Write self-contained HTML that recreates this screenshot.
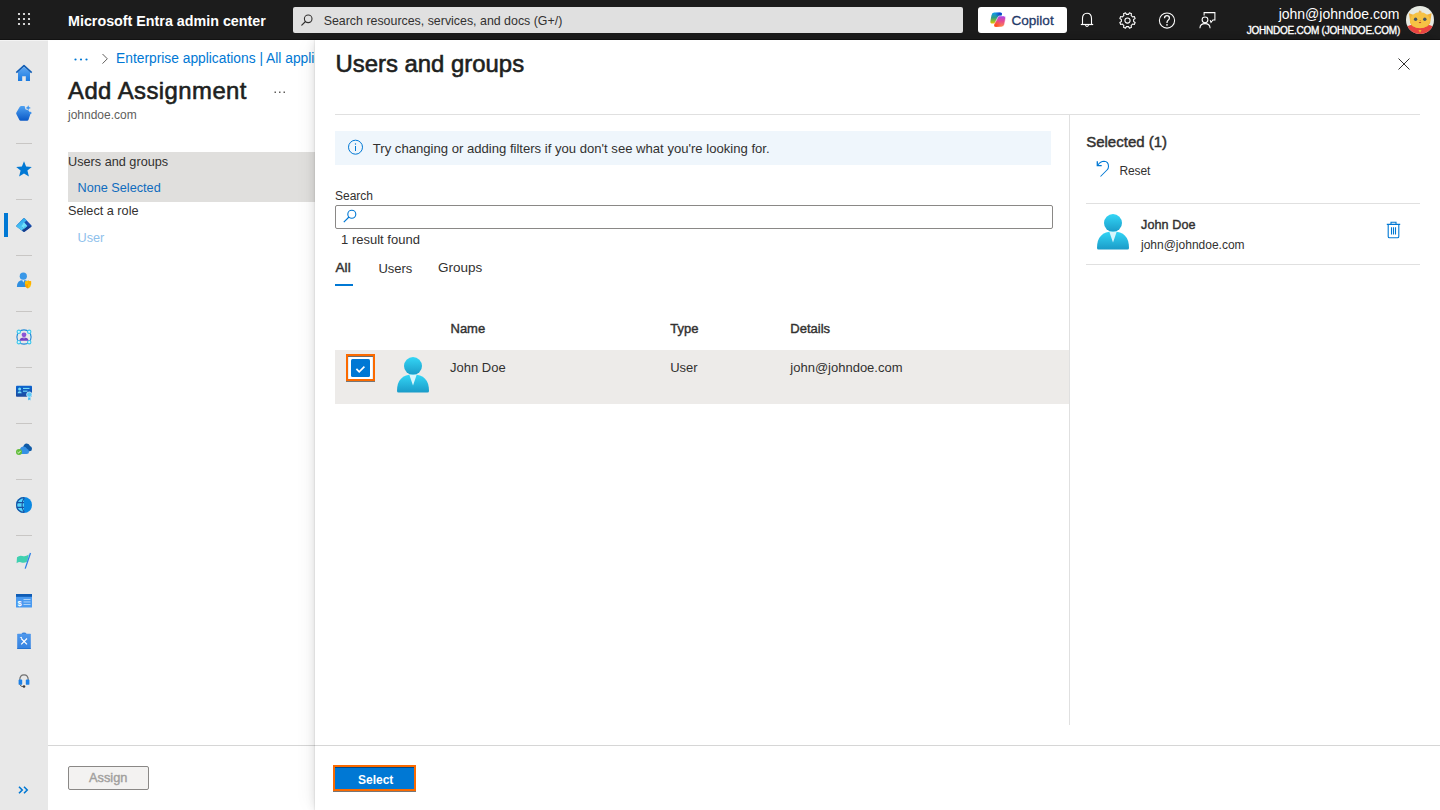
<!DOCTYPE html>
<html><head><meta charset="utf-8">
<style>
*{box-sizing:border-box;margin:0;padding:0}
html,body{width:1440px;height:810px;overflow:hidden;background:#fff;font-family:"Liberation Sans",sans-serif;color:#323130}
.a{position:absolute;white-space:nowrap}
svg.a{overflow:visible}
</style></head><body>
<div class="a" style="left:0px;top:0px;width:1440px;height:40px;background:#1c1c1c;"></div>
<div class="a" style="left:0px;top:39px;width:1440px;height:1px;background:#121212;"></div>
<svg class="a" style="left:18px;top:13px;" width="12" height="12" viewBox="0 0 12 12"><g fill="#fff"><circle cx="1" cy="1" r="1.1"/><circle cx="1" cy="6" r="1.1"/><circle cx="1" cy="11" r="1.1"/><circle cx="6" cy="1" r="1.1"/><circle cx="6" cy="6" r="1.1"/><circle cx="6" cy="11" r="1.1"/><circle cx="11" cy="1" r="1.1"/><circle cx="11" cy="6" r="1.1"/><circle cx="11" cy="11" r="1.1"/></g></svg>
<div class="a" style="left:68px;top:13.50px;font-size:14.3px;line-height:14.3px;color:#fff;font-weight:bold">Microsoft Entra admin center</div>
<div class="a" style="left:293px;top:7px;width:670px;height:26px;background:#e0e0e0;border-radius:2px"></div>
<svg class="a" style="left:301px;top:14px;" width="12" height="12" viewBox="0 0 12 12"><circle cx="7.2" cy="4.8" r="3.8" fill="none" stroke="#323130" stroke-width="1.1"/><path d="M4.5 7.5 L0.8 11.2" stroke="#323130" stroke-width="1.2" stroke-linecap="round"/></svg>
<div class="a" style="left:323.7px;top:14.50px;font-size:12.4px;line-height:12.4px;color:#323130">Search resources, services, and docs (G+/)</div>
<div class="a" style="left:978px;top:7px;width:89px;height:26px;background:#fff;border-radius:3px"></div>
<svg class="a" style="left:990px;top:12px;" width="16" height="15" viewBox="0 0 16 15"><defs>
<linearGradient id="cpa" x1="0" y1="0" x2="0" y2="1"><stop offset="0" stop-color="#0c9cf2"/><stop offset="0.45" stop-color="#2f9e8a"/><stop offset="0.7" stop-color="#7cb83a"/><stop offset="1" stop-color="#ecc400"/></linearGradient>
<linearGradient id="cpb" x1="0" y1="0" x2="0" y2="1"><stop offset="0" stop-color="#a844ee"/><stop offset="0.5" stop-color="#e84a8c"/><stop offset="1" stop-color="#ff8a4a"/></linearGradient>
<radialGradient id="cpc" cx="0.15" cy="0.9" r="0.5"><stop offset="0" stop-color="#ff4a1a"/><stop offset="1" stop-color="#ff4a1a" stop-opacity="0"/></radialGradient>
<radialGradient id="cpd" cx="0.85" cy="0.1" r="0.45"><stop offset="0" stop-color="#1038c8"/><stop offset="1" stop-color="#1038c8" stop-opacity="0"/></radialGradient></defs>
<path d="M4.2 0.6 H10 Q12.6 0.6 11.8 3 L8.2 10.2 Q7.6 11.6 6.2 11.6 H2.4 Q0 11.6 0.4 9.2 L1.4 3.4 Q1.9 0.6 4.2 0.6Z" fill="url(#cpa)"/>
<path d="M4.2 0.6 H10 Q12.6 0.6 11.8 3 L8.2 10.2 Q7.6 11.6 6.2 11.6 H2.4 Q0 11.6 0.4 9.2 L1.4 3.4 Q1.9 0.6 4.2 0.6Z" fill="url(#cpd)"/>
<path d="M11.8 14.9 H6 Q3.4 14.9 4.2 12.5 L7.8 5.3 Q8.4 3.9 9.8 3.9 H13.6 Q16 3.9 15.6 6.3 L14.6 12.1 Q14.1 14.9 11.8 14.9Z" fill="url(#cpb)" stroke="#fff" stroke-width="0.6"/>
<path d="M11.8 14.9 H6 Q3.4 14.9 4.2 12.5 L7.8 5.3 Q8.4 3.9 9.8 3.9 H13.6 Q16 3.9 15.6 6.3 L14.6 12.1 Q14.1 14.9 11.8 14.9Z" fill="url(#cpc)"/></svg>
<div class="a" style="left:1011.4px;top:13.79px;font-size:13.6px;line-height:13.6px;color:#1f3a68;-webkit-text-stroke:0.3px #1f3a68">Copilot</div>
<svg class="a" style="left:1080px;top:12px;" width="14" height="16" viewBox="0 0 14 16"><path d="M2.5 12 V6.5 Q2.5 1.2 7 1.2 Q11.5 1.2 11.5 6.5 V12" fill="none" stroke="#fff" stroke-width="1.1"/><path d="M0.8 12.5 H13.2" stroke="#fff" stroke-width="1.2"/><path d="M5.3 13.2 Q7 15.6 8.7 13.2" fill="none" stroke="#fff" stroke-width="1.1"/></svg>
<svg class="a" style="left:1118.5px;top:11.5px;" width="17" height="17" viewBox="0 0 17 17"><g fill="none" stroke="#fff" stroke-width="1.05"><path d="M14.61 9.52 L16.15 10.48 L15.31 12.51 L13.55 12.10 L12.10 13.55 L12.51 15.31 L10.48 16.15 L9.52 14.61 L7.48 14.61 L6.52 16.15 L4.49 15.31 L4.90 13.55 L3.45 12.10 L1.69 12.51 L0.85 10.48 L2.39 9.52 L2.39 7.48 L0.85 6.52 L1.69 4.49 L3.45 4.90 L4.90 3.45 L4.49 1.69 L6.52 0.85 L7.48 2.39 L9.52 2.39 L10.48 0.85 L12.51 1.69 L12.10 3.45 L13.55 4.90 L15.31 4.49 L16.15 6.52 L14.61 7.48Z" stroke-linejoin="round"/><circle cx="8.5" cy="8.5" r="2.6"/></g></svg>
<svg class="a" style="left:1158.5px;top:11.5px;" width="17" height="17" viewBox="0 0 17 17"><circle cx="8" cy="8.5" r="7.6" fill="none" stroke="#fff" stroke-width="1.05"/><path d="M5.5 6.3 Q5.5 3.7 8 3.7 Q10.4 3.7 10.4 5.9 Q10.4 7.3 9.1 8.2 Q8 9 8 10.4 V11" fill="none" stroke="#fff" stroke-width="1.25"/><rect x="7.2" y="12.2" width="1.6" height="1.4" fill="#fff"/></svg>
<svg class="a" style="left:1198.5px;top:11.5px;" width="17" height="17" viewBox="0 0 17 17"><path d="M5.1 3.4 V0.6 H15.9 V7.9 H13.9 L12 10.5 L11.2 8.2" fill="none" stroke="#fff" stroke-width="1.05"/><circle cx="6" cy="7.8" r="2.9" fill="none" stroke="#fff" stroke-width="1.05"/><path d="M0.9 16.2 Q1.1 11.6 6 11.6 Q10.9 11.6 11.1 16.2" fill="none" stroke="#fff" stroke-width="1.05"/></svg>
<div class="a" style="right:40.5px;top:7.05px;font-size:14px;line-height:14px;color:#fff;text-align:right">john@johndoe.com</div>
<div class="a" style="right:40px;top:26.24px;font-size:10px;line-height:10px;color:#fff;text-align:right;letter-spacing:-0.25px;-webkit-text-stroke:0.35px #fff">JOHNDOE.COM (JOHNDOE.COM)</div>
<svg class="a" style="left:1406px;top:6px;" width="28" height="28" viewBox="0 0 28 28"><defs><clipPath id="avc"><circle cx="14" cy="14" r="14"/></clipPath></defs>
<g clip-path="url(#avc)"><rect width="28" height="28" fill="#e6e9e2"/>
<path d="M0 22 Q3 17.5 14 18.5 Q25 17.5 28 22 V28 H0Z" fill="#e94440"/>
<path d="M2.9 7.3 L8 9 Q14 4.5 20 9 L25.6 7.3 L24.6 14 Q25 21.7 14 21.9 Q3 21.7 3.9 14Z" fill="#f1b13a"/>
<ellipse cx="14" cy="14.3" rx="10" ry="8" fill="#f6c244"/>
<path d="M12.5 6.5 L13.4 4 L14 6 L15 4.2 L15.5 6.5Z" fill="#f0a030"/>
<circle cx="9.6" cy="13.3" r="1.7" fill="#4a5562"/><circle cx="18.8" cy="13.3" r="1.7" fill="#4a5562"/>
<circle cx="14.2" cy="14.6" r="0.6" fill="#c87a30"/>
<path d="M12.6 16 Q14 18.3 15.4 16Z" fill="#b83a2a"/>
<path d="M12.5 24 L14 27 L15.5 24Z" fill="#f0b030"/></g></svg>
<div class="a" style="left:0px;top:40px;width:48px;height:770px;background:#e8e8e8;"></div>
<div class="a" style="left:0px;top:40px;width:48px;height:1px;background:#f4f4f4;"></div>
<div class="a" style="left:16px;top:143px;width:16px;height:1px;background:#c8c6c4;"></div>
<div class="a" style="left:16px;top:199px;width:16px;height:1px;background:#c8c6c4;"></div>
<div class="a" style="left:16px;top:255px;width:16px;height:1px;background:#c8c6c4;"></div>
<div class="a" style="left:16px;top:311px;width:16px;height:1px;background:#c8c6c4;"></div>
<div class="a" style="left:16px;top:367px;width:16px;height:1px;background:#c8c6c4;"></div>
<div class="a" style="left:16px;top:423px;width:16px;height:1px;background:#c8c6c4;"></div>
<div class="a" style="left:16px;top:479px;width:16px;height:1px;background:#c8c6c4;"></div>
<div class="a" style="left:16px;top:535px;width:16px;height:1px;background:#c8c6c4;"></div>
<div class="a" style="left:4px;top:213px;width:4px;height:24px;background:#0078d4;"></div>
<svg class="a" style="left:16px;top:65px;" width="16" height="16" viewBox="0 0 16 16"><defs><linearGradient id="hm" x1="0" y1="0" x2="0" y2="1"><stop offset="0" stop-color="#5ea7f2"/><stop offset="1" stop-color="#1a7ae0"/></linearGradient></defs>
<path d="M2 7 L8 2 L14 7 V16 H9.8 V11.2 H6.2 V16 H2Z" fill="url(#hm)"/>
<path d="M0.3 7.6 L8 0.6 L15.7 7.6" fill="none" stroke="#0f5cb5" stroke-width="1.6" stroke-linejoin="round"/></svg>
<svg class="a" style="left:16px;top:105px;" width="16" height="16" viewBox="0 0 16 16"><defs><linearGradient id="cp2" x1="0" y1="0" x2="0" y2="1"><stop offset="0" stop-color="#4fa2f2"/><stop offset="1" stop-color="#0a58c6"/></linearGradient></defs>
<path d="M3.6 1.9 Q4.3 1 5.4 1 H8.6 L9.4 4.3 L12.6 5.4 L14.6 8.6 L12.4 15 Q12.1 15.8 11.2 15.8 H4.6 Q3.8 15.8 3.4 15 L0.3 9 Q0 8.3 0.4 7.6Z" fill="url(#cp2)"/>
<path d="M12.2 0.2 L13 2.1 L14.9 2.9 L13 3.7 L12.2 5.6 L11.4 3.7 L9.5 2.9 L11.4 2.1Z" fill="#3f96ee"/>
<circle cx="14.3" cy="7.9" r="1.2" fill="#3a8fea"/></svg>
<svg class="a" style="left:16px;top:161px;" width="16" height="16" viewBox="0 0 16 16"><path d="M8 0.3 L10.1 5.6 L15.8 5.9 L11.4 9.6 L12.9 15.6 L8 12.4 L3.1 15.6 L4.6 9.6 L0.2 5.9 L5.9 5.6Z" fill="#0078d4"/></svg>
<svg class="a" style="left:16px;top:218px;" width="16" height="14" viewBox="0 0 16 14"><defs><linearGradient id="en1" x1="0" y1="0" x2="0.3" y2="1"><stop offset="0" stop-color="#1f9ae8"/><stop offset="1" stop-color="#5ad2f8"/></linearGradient></defs>
<path d="M7.2 0.5 Q8 -0.2 8.8 0.5 L15.5 7.4 Q16.1 8.2 15.3 8.7 L8.9 13.4 Q8 14 7.1 13.4 L0.7 8.7 Q-0.1 8.2 0.5 7.4Z" fill="#1a4fae"/>
<path d="M7.2 0.5 Q8 -0.2 8.8 0.5 L10.8 2.6 L8 4.5 L5.2 8.5 L8.5 11 L7.2 13.5 L0.7 8.7 Q-0.1 8.2 0.5 7.4Z" fill="url(#en1)"/>
<path d="M8 4 L11.5 8.2 L8.5 10.8 L5 8.4Z" fill="#6ee2fa"/>
<path d="M11.5 8.2 L8.5 10.8 L8 8.4 Z" fill="#48c0ea"/>
<path d="M5.8 12 L8.5 10.8 L11.5 8.2 L15.6 8.4 L8.9 13.4 Q8 14 7.1 13.4Z" fill="#143d8c"/></svg>
<svg class="a" style="left:16px;top:272px;" width="16" height="17" viewBox="0 0 16 17"><circle cx="7.3" cy="4.2" r="3.6" fill="#3a98e8"/>
<path d="M0.9 15 Q0.9 8 7.3 8 Q11 8 12 10 V15Z" fill="#2f8ee0"/>
<path d="M6.2 8 L7.3 10.8 L8.4 8Z" fill="#d6ebfb"/>
<path d="M8.9 9.3 Q11.5 9.2 12 8.6 Q12.5 9.2 15.1 9.3 V12.5 Q15.1 15 12 16.4 Q8.9 15 8.9 12.5Z" fill="#ffc000"/>
<path d="M8.9 12.2 H12 V16.4 Q8.9 15 8.9 12.5Z" fill="#ff9f00"/>
<path d="M12 8.6 Q12.5 9.2 15.1 9.3 V12.2 H12Z" fill="#ffb000"/></svg>
<svg class="a" style="left:16px;top:329px;" width="16" height="16" viewBox="0 0 16 16"><circle cx="8" cy="8" r="7.1" fill="none" stroke="#1e88d8" stroke-width="1.1"/>
<g fill="#d8f6fc" stroke="#3cc6ec" stroke-width="1.1"><circle cx="2.8" cy="2.8" r="1.7"/><circle cx="13.2" cy="2.8" r="1.7"/><circle cx="2.8" cy="13.2" r="1.7"/><circle cx="13.2" cy="13.2" r="1.7"/></g>
<circle cx="8" cy="5.8" r="2.4" fill="#8a55d6"/>
<path d="M3.5 11.8 Q3.8 8.6 8 8.6 Q12.2 8.6 12.5 11.8Z" fill="#7440c4"/>
<path d="M7.2 8.6 L8 10 L8.8 8.6Z" fill="#c9b0f0"/></svg>
<svg class="a" style="left:16px;top:385px;" width="16" height="16" viewBox="0 0 16 16"><defs><linearGradient id="idg" x1="0" y1="0" x2="0" y2="1"><stop offset="0" stop-color="#0a64d0"/><stop offset="1" stop-color="#1c4a9e"/></linearGradient></defs>
<rect x="0" y="0.7" width="16" height="11" rx="0.8" fill="url(#idg)"/>
<circle cx="3.6" cy="4.1" r="1.5" fill="#72dcf8"/><path d="M1.5 8.3 Q1.7 6.2 3.6 6.2 Q5.5 6.2 5.7 8.3Z" fill="#72dcf8"/>
<rect x="7" y="2.9" width="6.5" height="1.1" fill="#72dcf8"/><rect x="7" y="5.6" width="4.5" height="1.1" fill="#72dcf8"/>
<path d="M12.2 11 V15.6 L13.3 14.6 L14.4 15.6 V11Z" fill="#3cb8f2"/>
<circle cx="13.3" cy="9.6" r="2.7" fill="#5ccaf6" stroke="#e8f7fd" stroke-width="0.7"/></svg>
<svg class="a" style="left:16px;top:443px;" width="16" height="12" viewBox="0 0 16 12"><path d="M7 5 Q7.5 0.5 10.8 0.5 Q13.2 0.6 14 3 Q16 3.6 16 5.8 Q16 8.3 13.6 8.3 H8Z" fill="#0f5aa6"/>
<path d="M3 11 Q1.5 11 1.5 9 Q1.5 7 3.8 6.5 Q4.8 3.3 7.7 3.4 Q10.2 3.5 11 5.8 Q13 6.2 13 8.5 Q13 11 10.5 11Z" fill="#3590e4"/>
<circle cx="3" cy="8.9" r="3" fill="#62bd3a"/>
<path d="M1.5 9.1 L2.6 10.1 L4.6 7.9" fill="none" stroke="#fff" stroke-width="0.8"/></svg>
<svg class="a" style="left:16px;top:497px;" width="16" height="16" viewBox="0 0 16 16"><circle cx="8" cy="8" r="8" fill="#0a88e2"/>
<path d="M8 0 A8 8 0 0 0 8 16Z" fill="#55d4fa"/>
<path d="M8 0.6 A7.4 7.4 0 0 0 8 15.4" fill="none" stroke="#1b4fa0" stroke-width="1.2"/>
<path d="M8.3 0.6 Q3.8 8 8.3 15.4 M1 5.6 H8 M1 10.4 H8" fill="none" stroke="#1b4fa0" stroke-width="1.1"/></svg>
<svg class="a" style="left:16px;top:552px;" width="16" height="17" viewBox="0 0 16 17"><path d="M1 5.2 Q3.5 3 6.5 4 Q9.5 5 12.8 2.6 L11.2 9.4 Q8.2 11.5 5.5 10.4 Q3 9.5 0.6 11.2Z" fill="#3fd0b0"/>
<path d="M14.5 1 L9.2 16.6" stroke="#2b7fe8" stroke-width="1.3"/></svg>
<svg class="a" style="left:16px;top:594px;" width="16" height="14" viewBox="0 0 16 14"><rect x="0" y="0" width="16" height="13.5" rx="0.5" fill="#4a9af0"/>
<rect x="0" y="0" width="16" height="2.8" fill="#0f5cb5"/>
<text x="1.6" y="11.6" font-family="Liberation Sans" font-weight="bold" font-size="7.5" fill="#fff">$</text>
<rect x="7.5" y="5" width="7" height="0.9" fill="#b8d8fa"/><rect x="7.5" y="7.5" width="7" height="0.9" fill="#b8d8fa"/><rect x="7.5" y="10" width="7" height="0.9" fill="#b8d8fa"/></svg>
<svg class="a" style="left:17px;top:632px;" width="14" height="17" viewBox="0 0 14 17"><defs><linearGradient id="clg" x1="0" y1="0" x2="0" y2="1"><stop offset="0" stop-color="#4f98ec"/><stop offset="1" stop-color="#3582e0"/></linearGradient></defs>
<rect x="0.2" y="1.8" width="13.6" height="15" rx="0.5" fill="url(#clg)"/>
<rect x="0.2" y="16" width="13.6" height="0.9" fill="#1f6fd0"/>
<path d="M4.5 1.9 Q5 0.6 7 0.6 Q9 0.6 9.5 1.9Z" fill="#3a86e0"/>
<path d="M4.2 12.3 L10 6.5 M4.2 6.5 L10 12.3" stroke="#fff" stroke-width="1.2"/>
<path d="M2.6 5.6 L4.6 4.8 L5.2 6.6Z" fill="#fff"/></svg>
<svg class="a" style="left:18px;top:674px;" width="12" height="14" viewBox="0 0 12 14"><path d="M1.8 7 V5.8 Q1.8 0.8 6 0.8 Q10.2 0.8 10.2 5.8 V7" fill="none" stroke="#707070" stroke-width="1.2"/>
<rect x="0.6" y="5.6" width="3.6" height="5.2" rx="0.9" fill="#1c80e6"/><rect x="7.8" y="5.6" width="3.6" height="5.2" rx="0.9" fill="#1c80e6"/>
<path d="M2 10.6 Q2.4 12.6 5 12.6" fill="none" stroke="#555" stroke-width="0.9"/>
<circle cx="6" cy="12.5" r="1.3" fill="#3a3a3a"/></svg>
<svg class="a" style="left:18px;top:786px;" width="11" height="8" viewBox="0 0 11 8"><path d="M1 0.8 L4.2 4 L1 7.2 M6 0.8 L9.2 4 L6 7.2" fill="none" stroke="#0078d4" stroke-width="1.6"/></svg>
<svg class="a" style="left:74px;top:58px;" width="15" height="3" viewBox="0 0 15 3"><g fill="#0078d4"><circle cx="1.5" cy="1.5" r="1.1"/><circle cx="7" cy="1.5" r="1.1"/><circle cx="12.5" cy="1.5" r="1.1"/></g></svg>
<svg class="a" style="left:101px;top:53px;" width="8" height="12" viewBox="0 0 8 12"><path d="M1.5 1 L6.3 5.8 L1.5 10.6" fill="none" stroke="#605e5c" stroke-width="1"/></svg>
<div class="a" style="left:48px;top:40px;width:267px;height:40px;overflow:hidden"><div class="a" style="left:68px;top:12.32px;font-size:13.8px;line-height:13.8px;color:#0078d4">Enterprise applications | All applications</div>
</div>
<div class="a" style="left:68px;top:79.07px;font-size:23.9px;line-height:23.9px;color:#201f1e;letter-spacing:0.45px;-webkit-text-stroke:0.6px #201f1e">Add Assignment</div>
<svg class="a" style="left:274px;top:91px;" width="12" height="3" viewBox="0 0 12 3"><g fill="#605e5c"><rect x="0.5" y="0.5" width="1.5" height="1.5"/><rect x="5" y="0.5" width="1.5" height="1.5"/><rect x="9.5" y="0.5" width="1.5" height="1.5"/></g></svg>
<div class="a" style="left:68px;top:108.94px;font-size:12px;line-height:12px;color:#605e5c">johndoe.com</div>
<div class="a" style="left:68px;top:152px;width:247px;height:50px;background:#e0dfdd;"></div>
<div class="a" style="left:68px;top:155.55px;font-size:12.7px;line-height:12.7px;color:#323130">Users and groups</div>
<div class="a" style="left:77.5px;top:182.45px;font-size:12.7px;line-height:12.7px;color:#0f6cbd">None Selected</div>
<div class="a" style="left:68px;top:205.45px;font-size:12.7px;line-height:12.7px;color:#323130">Select a role</div>
<div class="a" style="left:77.5px;top:232.15px;font-size:12.7px;line-height:12.7px;color:#8fc1ec">User</div>
<div class="a" style="left:48px;top:745px;width:267px;height:1px;background:#d6d6d6;"></div>
<div class="a" style="left:68px;top:766px;width:81px;height:24px;background:#f3f2f1;border:1px solid #8a8886;border-radius:2px"></div>
<div class="a" style="left:89px;top:771.76px;font-size:12.8px;line-height:12.8px;color:#a19f9d;-webkit-text-stroke:0.4px #a19f9d">Assign</div>
<div class="a" style="left:315px;top:40px;width:1125px;height:770px;background:#fff;box-shadow:-1px 0 1px rgba(0,0,0,0.05), -3px 0 8px -1px rgba(0,0,0,0.08), -8px 0 18px -4px rgba(0,0,0,0.05)"></div>
<div class="a" style="left:335.5px;top:51.77px;font-size:23.9px;line-height:23.9px;color:#201f1e;-webkit-text-stroke:0.6px #201f1e">Users and groups</div>
<svg class="a" style="left:1398px;top:58px;" width="12" height="12" viewBox="0 0 12 12"><path d="M0.5 0.5 L11.5 11.5 M11.5 0.5 L0.5 11.5" stroke="#323130" stroke-width="1"/></svg>
<div class="a" style="left:335px;top:114px;width:1085px;height:1px;background:#e0e0e0;"></div>
<div class="a" style="left:335px;top:131px;width:716px;height:34px;background:#eff6fc;"></div>
<svg class="a" style="left:347px;top:139px;" width="16" height="16" viewBox="0 0 16 16"><circle cx="8.5" cy="8.2" r="7" fill="none" stroke="#0078d4" stroke-width="1"/><rect x="8" y="7" width="1" height="5" fill="#0078d4"/><circle cx="8.5" cy="5" r="0.7" fill="#0078d4"/></svg>
<div class="a" style="left:372.8px;top:141.81px;font-size:13.1px;line-height:13.1px;color:#323130">Try changing or adding filters if you don't see what you're looking for.</div>
<div class="a" style="left:335px;top:189.64px;font-size:12px;line-height:12px;color:#323130">Search</div>
<div class="a" style="left:335px;top:205px;width:718px;height:24px;background:#fff;border:1px solid #8a8886;border-radius:2px"></div>
<svg class="a" style="left:343px;top:209px;" width="14" height="14" viewBox="0 0 14 14"><circle cx="8.8" cy="5.2" r="4" fill="none" stroke="#0078d4" stroke-width="1.1"/><path d="M6 8 L0.8 13.2" stroke="#0078d4" stroke-width="1.2"/></svg>
<div class="a" style="left:341.1px;top:232.90px;font-size:13px;line-height:13px;color:#323130">1 result found</div>
<div class="a" style="left:335.5px;top:261.47px;font-size:13.5px;line-height:13.5px;color:#323130;letter-spacing:0.1px;-webkit-text-stroke:0.45px #323130">All</div>
<div class="a" style="left:378.4px;top:261.70px;font-size:13px;line-height:13px;color:#323130">Users</div>
<div class="a" style="left:438px;top:261.27px;font-size:13.5px;line-height:13.5px;color:#323130">Groups</div>
<div class="a" style="left:335px;top:284px;width:18px;height:2px;background:#0078d4;"></div>
<div class="a" style="left:450.5px;top:322.20px;font-size:13px;line-height:13px;color:#323130;-webkit-text-stroke:0.4px #323130">Name</div>
<div class="a" style="left:670.2px;top:322.20px;font-size:13px;line-height:13px;color:#323130;-webkit-text-stroke:0.4px #323130">Type</div>
<div class="a" style="left:790.3px;top:322.20px;font-size:13px;line-height:13px;color:#323130;-webkit-text-stroke:0.4px #323130">Details</div>
<div class="a" style="left:335px;top:350px;width:734px;height:54px;background:#edebe9;"></div>
<div class="a" style="left:346px;top:354px;width:29px;height:27px;background:#fff;border:2px solid #fb6a00;box-shadow:0 1px 0 #777, inset 0 1px 0 #6d6d6d, inset 1px 0 0 #e4eef6, inset -1px 0 0 #e4eef6"></div>
<div class="a" style="left:351px;top:359px;width:19px;height:18px;background:#0078d4;border-radius:1.5px"></div>
<svg class="a" style="left:355px;top:365px;" width="11" height="9" viewBox="0 0 11 9"><path d="M1.4 3.9 L4.2 6.8 L9.4 1.7" fill="none" stroke="#fff" stroke-width="1.7"/></svg>
<svg class="a" style="left:396.5px;top:356.5px;" width="32" height="36" viewBox="0 0 32 36"><defs><linearGradient id="pg1" x1="0" y1="0" x2="0" y2="1"><stop offset="0" stop-color="#34d6f6"/><stop offset="1" stop-color="#1a9bc8"/></linearGradient></defs>
<circle cx="16" cy="9" r="9" fill="url(#pg1)"/>
<path d="M0 34 Q0 17.5 16 17.5 Q32 17.5 32 34 Q32 35.5 30.5 35.5 H1.5 Q0 35.5 0 34Z" fill="url(#pg1)"/>
<path d="M12.3 17.8 L16 28.5 L19.7 17.8Z" fill="#d8f6fc"/></svg>
<div class="a" style="left:450px;top:361.00px;font-size:13px;line-height:13px;color:#323130">John Doe</div>
<div class="a" style="left:670.2px;top:361.00px;font-size:13px;line-height:13px;color:#323130">User</div>
<div class="a" style="left:790.3px;top:361.00px;font-size:13px;line-height:13px;color:#323130">john@johndoe.com</div>
<div class="a" style="left:1069px;top:115px;width:1px;height:610px;background:#e0e0e0;"></div>
<div class="a" style="left:1086.2px;top:134.10px;font-size:15px;line-height:15px;color:#323130;-webkit-text-stroke:0.45px #323130">Selected (1)</div>
<svg class="a" style="left:1095px;top:159px;" width="16" height="19" viewBox="0 0 16 19"><path d="M2.8 6.2 Q5.5 2.3 9 2.3 Q13.5 2.5 13.5 7.5 Q13.5 9.5 12 11 L5.5 17.5" fill="none" stroke="#0078d4" stroke-width="1.05"/><path d="M2.3 2.2 V6.6 H6.7" fill="none" stroke="#0078d4" stroke-width="1.3"/></svg>
<div class="a" style="left:1119.4px;top:164.54px;font-size:12px;line-height:12px;color:#323130;letter-spacing:-0.1px">Reset</div>
<div class="a" style="left:1086px;top:203px;width:334px;height:1px;background:#e0e0e0;"></div>
<svg class="a" style="left:1097.4px;top:213.5px;" width="32" height="36" viewBox="0 0 32 36"><defs><linearGradient id="pg2" x1="0" y1="0" x2="0" y2="1"><stop offset="0" stop-color="#34d6f6"/><stop offset="1" stop-color="#1a9bc8"/></linearGradient></defs>
<circle cx="16" cy="9" r="9" fill="url(#pg2)"/>
<path d="M0 34 Q0 17.5 16 17.5 Q32 17.5 32 34 Q32 35.5 30.5 35.5 H1.5 Q0 35.5 0 34Z" fill="url(#pg2)"/>
<path d="M12.3 17.8 L16 28.5 L19.7 17.8Z" fill="#d8f6fc"/></svg>
<div class="a" style="left:1141px;top:218.53px;font-size:12.6px;line-height:12.6px;color:#323130;letter-spacing:0.1px;-webkit-text-stroke:0.4px #323130">John Doe</div>
<div class="a" style="left:1141px;top:238.64px;font-size:12px;line-height:12px;color:#323130">john@johndoe.com</div>
<svg class="a" style="left:1386px;top:221px;" width="15" height="18" viewBox="0 0 15 18"><path d="M0.8 3.4 H14.2 M5 3.4 V1.3 H10 V3.4 M2.2 3.4 V15.5 Q2.2 16.8 3.5 16.8 H11.5 Q12.8 16.8 12.8 15.5 V3.4 M5.5 6.2 V13.6 M7.5 6.2 V13.6 M9.5 6.2 V13.6" fill="none" stroke="#0078d4" stroke-width="1.1"/></svg>
<div class="a" style="left:1086px;top:264px;width:334px;height:1px;background:#e0e0e0;"></div>
<div class="a" style="left:315px;top:745px;width:1125px;height:1px;background:#d6d6d6;"></div>
<div class="a" style="left:333px;top:765px;width:83px;height:26px;background:#0078d4;border:2px solid #fb6a00;box-shadow:0 1px 0 #777, inset 0 1px 0 #004c8c"></div>
<div class="a" style="left:358px;top:773.64px;font-size:12px;line-height:12px;color:#fff;font-weight:bold">Select</div>
</body></html>
